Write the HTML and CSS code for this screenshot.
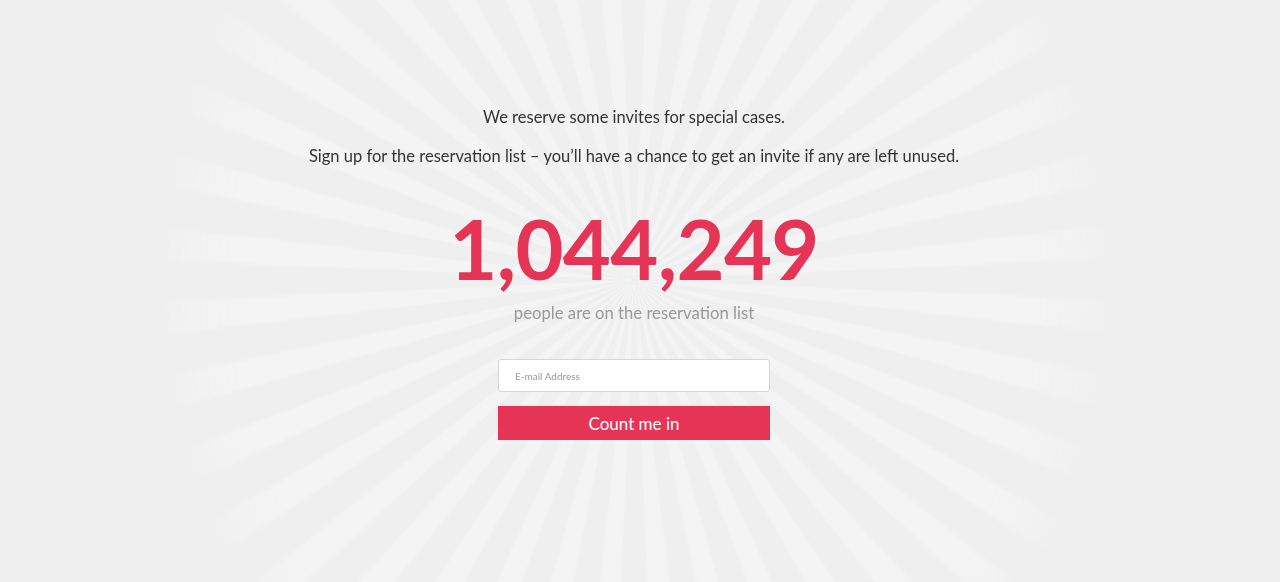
FILE: index.html
```html
<!DOCTYPE html>
<html lang="en">
<head>
<meta charset="utf-8">
<title>Reservation list</title>
<link rel="stylesheet" href="styles.css">
</head>
<body>
<div class="burst"></div>
<main class="page">
  <p class="lead">We reserve some invites for special cases.</p>
  <p class="lead second">Sign up for the reservation list – you’ll have a chance to get an invite if any are left unused.</p>
  <div class="count">1,044,249</div>
  <p class="sub">people are on the reservation list</p>
  <form class="signup">
    <input class="email" type="text" placeholder="E-mail Address">
    <button class="btn" type="button">Count me in</button>
  </form>
</main>
</body>
</html>
```
FILE: styles.css
```css
html, body {
  margin: 0;
  padding: 0;
  height: 100%;
}
body {
  background: #efefef;
  font-family: Lato, "Open Sans", sans-serif;
  overflow: hidden;
  position: relative;
}
.burst {
  position: fixed;
  inset: 0;
  background: repeating-conic-gradient(from 2deg at 634px 280px, rgba(245,245,245,0) 0deg, #f4f4f4 0.8deg 4deg, rgba(245,245,245,0) 4.8deg 9deg);
  -webkit-mask-image: radial-gradient(ellipse 490px 560px at 634px 280px, #000 0, #000 80%, rgba(0,0,0,0.5) 92%, transparent 98%);
  mask-image: radial-gradient(ellipse 490px 560px at 634px 280px, #000 0, #000 80%, rgba(0,0,0,0.5) 92%, transparent 98%);
}
.page {
  position: relative;
  display: flex;
  flex-direction: column;
  align-items: center;
  padding: 106px 12px 0 0;
  color: #333;
}
.lead {
  margin: 0;
  font-size: 16.5px;
  line-height: 22px;
}
.second {
  margin-top: 17px;
}
.count {
  margin-top: 31px;
  font-weight: 700;
  font-size: 83px;
  line-height: 100px;
  color: #e63456;
  letter-spacing: -0.7px;
}
.sub {
  margin: 0;
  margin-top: 4px;
  font-size: 16.7px;
  line-height: 22px;
  color: #999;
}
.signup {
  margin-top: 35px;
  display: flex;
  flex-direction: column;
  gap: 14px;
  width: 272px;
}
.email {
  box-sizing: border-box;
  height: 33px;
  width: 100%;
  border: 1px solid #d6d6d6;
  border-radius: 3px;
  background: #fff;
  padding: 0 16px;
  font-family: Lato, sans-serif;
  font-size: 10px;
  color: #333;
  outline: none;
}
.email::placeholder {
  color: #999;
}
.btn {
  height: 34px;
  width: 100%;
  border: 0;
  border-radius: 0;
  background: #e63456;
  color: #fff;
  font-family: Lato, sans-serif;
  font-size: 17px;
  padding: 0;
  cursor: pointer;
}
```
